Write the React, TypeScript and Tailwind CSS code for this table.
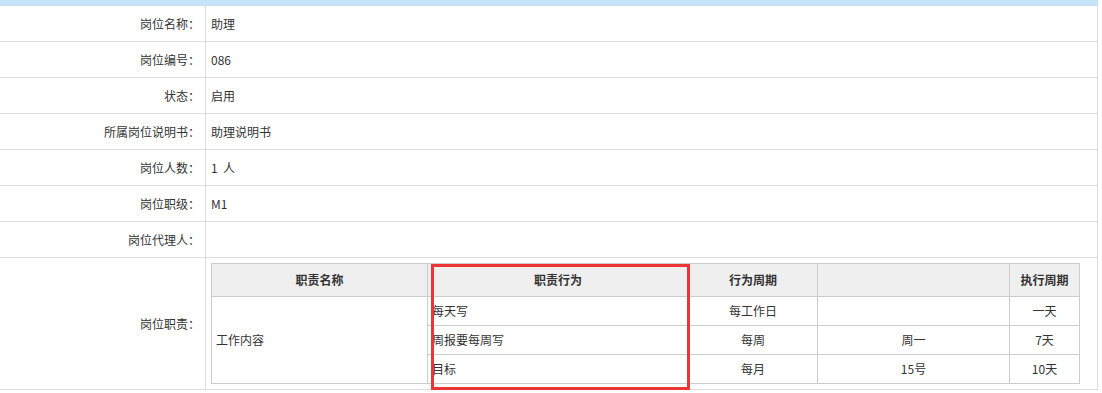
import React from 'react'

const rows = [
    { label: '岗位名称：', value: '助理' },
    { label: '岗位编号：', value: '086' },
    { label: '状态：', value: '启用' },
    { label: '所属岗位说明书：', value: '助理说明书' },
    { label: '岗位人数：', value: '1  人' },
    { label: '岗位职级：', value: 'M1' },
    { label: '岗位代理人：', value: '' },
]

const duties = [
    { action: '每天写', cycle: '每工作日', day: '', exec: '一天' },
    { action: '周报要每周写', cycle: '每周', day: '周一', exec: '7天' },
    { action: '目标', cycle: '每月', day: '15号', exec: '10天' },
]

const Row = ({ label, value }: { label: string; value: string }) => (
    <div className="flex h-[36px] border-b border-[#dddddd]">
        <div className="w-[206px] shrink-0 border-r border-[#dddddd] flex items-center justify-end pr-[5px]">
            {label}
        </div>
        <div className="flex-1 border-r border-[#dddddd] flex items-center pl-[5px] whitespace-pre">
            {value}
        </div>
    </div>
)

export default function App() {
    return (
        <div
            className="relative w-[1102px] h-[393px] bg-white text-[12px] text-[#333333]"
            style={{ fontFamily: '"Noto Sans CJK SC", "Liberation Sans", sans-serif' }}
        >
            <div className="w-[1098px]">
                <div className="h-[6px] bg-[#c5e4f8]" />
                {rows.map((r) => (
                    <Row key={r.label} {...r} />
                ))}
                <div className="flex h-[132px] border-b border-[#dddddd]">
                    <div className="w-[206px] shrink-0 border-r border-[#dddddd] flex items-center justify-end pr-[5px]">
                        岗位职责：
                    </div>
                    <div className="flex-1 border-r border-[#dddddd] pl-[5px] pt-[5px]">
                        <table className="w-[868px] table-fixed border-collapse border border-[#cccccc]">
                            <colgroup>
                                <col className="w-[216px]" />
                                <col className="w-[261px]" />
                                <col className="w-[129px]" />
                                <col className="w-[192px]" />
                                <col className="w-[70px]" />
                            </colgroup>
                            <thead>
                                <tr className="h-[33px] bg-[#efefef] font-bold">
                                    <th className="border border-[#cccccc]">职责名称</th>
                                    <th className="border border-[#cccccc]">职责行为</th>
                                    <th className="border border-[#cccccc]">行为周期</th>
                                    <th className="border border-[#cccccc]"></th>
                                    <th className="border border-[#cccccc]">执行周期</th>
                                </tr>
                            </thead>
                            <tbody>
                                {duties.map((d, i) => (
                                    <tr key={d.action} className="h-[29px]">
                                        {i === 0 && (
                                            <td rowSpan={3} className="border border-[#cccccc] pl-[4px]">
                                                工作内容
                                            </td>
                                        )}
                                        <td className="border border-[#cccccc] pl-[4px]">{d.action}</td>
                                        <td className="border border-[#cccccc] text-center">{d.cycle}</td>
                                        <td className="border border-[#cccccc] text-center">{d.day}</td>
                                        <td className="border border-[#cccccc] text-center">{d.exec}</td>
                                    </tr>
                                ))}
                            </tbody>
                        </table>
                    </div>
                </div>
            </div>

            {/* red annotation box */}
            <div className="absolute left-[431px] top-[264px] w-[259px] h-[126px] border-[3px] border-[#ee3535]" />
        </div>
    )
}
